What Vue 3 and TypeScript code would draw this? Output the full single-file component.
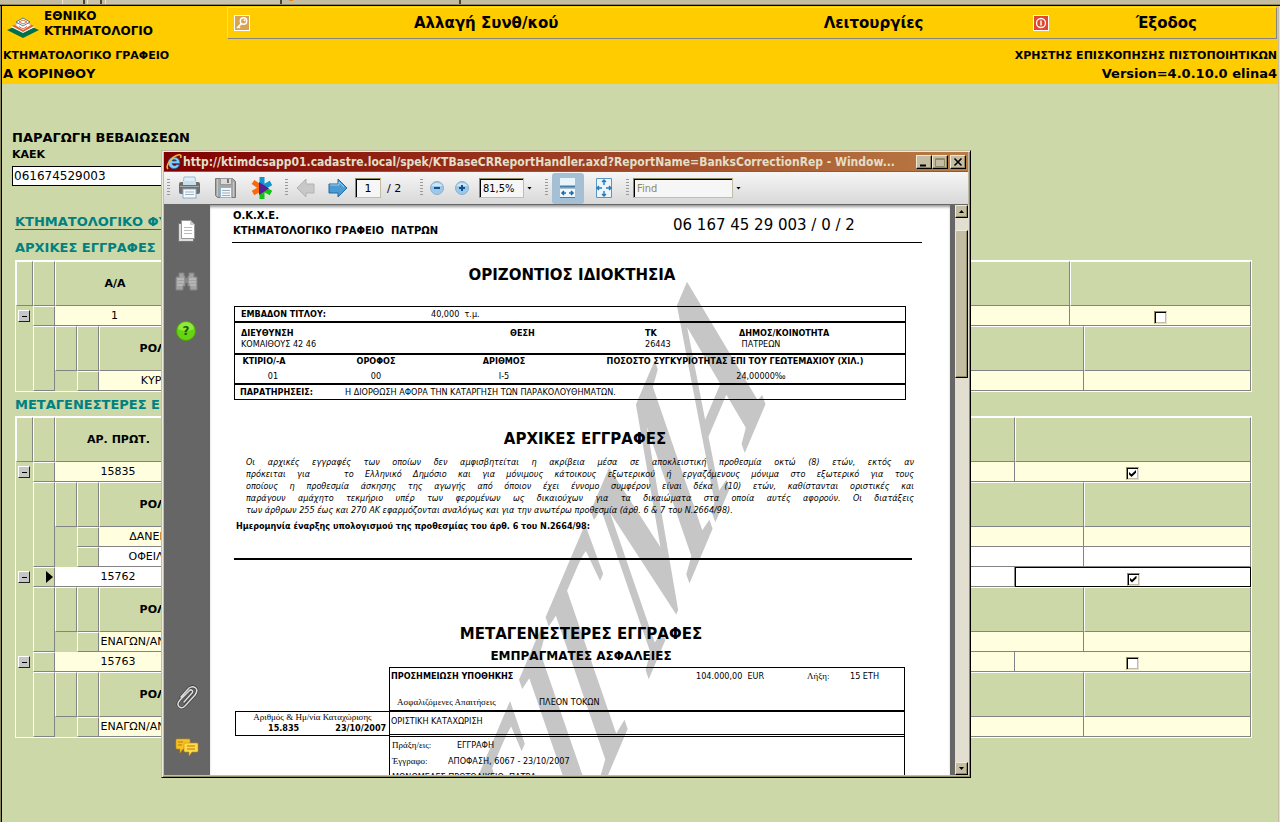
<script setup lang="ts">
import { ref } from 'vue'

interface Child { role: string; white?: boolean }
interface Entry { no: string; checked: boolean; current?: boolean; children: Child[] }
interface Section { title: string; head: string; kind: string; entries: Entry[] }

const kaek = ref('061674529003')
const pageNo = ref('1')
const zoomLevel = ref('81,5%')
const findText = ref('')

const sections = ref<Section[]>([
  {
    title: 'ΑΡΧΙΚΕΣ ΕΓΓΡΑΦΕΣ',
    head: 'Α/Α',
    kind: 'initial',
    entries: [{ no: '1', checked: false, children: [{ role: 'ΚΥΡΙΟΣ' }] }],
  },
  {
    title: 'ΜΕΤΑΓΕΝΕΣΤΕΡΕΣ ΕΓΓΡΑΦΕΣ',
    head: 'ΑΡ. ΠΡΩΤ.',
    kind: 'later',
    entries: [
      { no: '15835', checked: true, children: [{ role: 'ΔΑΝΕΙΣΤΗΣ' }, { role: 'ΟΦΕΙΛΕΤΗΣ', white: true }] },
      { no: '15762', checked: true, current: true, children: [{ role: 'ΕΝΑΓΩΝ/ΑΝΑΚΟΠΤΩΝ' }] },
      { no: '15763', checked: false, children: [{ role: 'ΕΝΑΓΩΝ/ΑΝΑΚΟΠΤΩΝ' }] },
    ],
  },
])

const paragraph: string[] = [
  'Οι αρχικές εγγραφές των οποίων δεν αμφισβητείται η ακρίβεια μέσα σε αποκλειστική προθεσμία οκτώ (8) ετών, εκτός αν',
  'πρόκειται για \u00a0 το Ελληνικό Δημόσιο και για μόνιμους κάτοικους εξωτερικού ή εργαζόμενους μόνιμα στο εξωτερικό για τους',
  'οποίους η προθεσμία άσκησης της αγωγής από όποιον έχει έννομο συμφέρον είναι δέκα (10) ετών, καθίστανται οριστικές και',
  'παράγουν αμάχητο τεκμήριο υπέρ των φερομένων ως δικαιούχων για τα δικαιώματα στα οποία αυτές αφορούν. Οι διατάξεις',
]
</script>

<template>
  <div class="desktop">
    <div class="strip">
      <i class="tab t1"></i><i class="tab t2"></i><i class="tab t3"></i><i class="dot"></i><i class="tab t4"></i>
    </div>
    <div class="page">
      <header class="top">
        <div class="bar">
          <div class="brand">
            <svg width="32" height="22" viewBox="0 0 32 22">
              <path d="M0 13 16 6 32 13 16 21Z" fill="#00704a" />
              <path d="M4 10 16 4 28 10 16 16Z" fill="#fff" />
              <path d="M5 9 16 4 27 9 16 15Z" fill="#e0622f" />
              <path d="M8 8 16 4 24 8 16 13Z" fill="#fff" />
              <path d="M9 5 16 1 23 5 16 9Z" fill="#fff" stroke="#226a9a" stroke-width=".8" />
              <path d="M12 5 16 3 20 5 16 7Z" fill="none" stroke="#e06a3a" />
              <path d="M12 9.500 16 12l4-2.500" stroke="#e06a3a" fill="none" />
            </svg>
            <h1>ΕΘΝΙΚΟ<br />ΚΤΗΜΑΤΟΛΟΓΙΟ</h1>
          </div>
          <nav class="menu">
            <svg width="16" height="16" viewBox="0 0 16 16">
              <rect width="16" height="16" fill="#fff" /><rect x="1" y="1" width="14" height="14" fill="#d9a254" />
              <circle cx="9.500" cy="6" r="3.200" fill="none" stroke="#fff" stroke-width="1.400" /><circle cx="10.500" cy="5.200" r="1" fill="#fff" />
              <path d="M7.500 8.500 3 13M4.500 11.500l1.500 1.500" stroke="#fff" stroke-width="1.600" fill="none" />
            </svg>
            <a href="#change">Αλλαγή Συνθ/κού</a>
            <a href="#functions">Λειτουργίες</a>
            <svg width="16" height="16" viewBox="0 0 16 16">
              <rect width="16" height="16" fill="#fff" /><rect x="1" y="1" width="14" height="14" fill="#e0492e" />
              <circle cx="8" cy="8" r="4.500" fill="none" stroke="#fff" stroke-width="1.300" />
              <path d="M8 5.500v5" stroke="#fff" stroke-width="1.500" />
            </svg>
            <a href="#exit">Έξοδος</a>
          </nav>
        </div>
        <div class="info">
          <p class="small">ΚΤΗΜΑΤΟΛΟΓΙΚΟ ΓΡΑΦΕΙΟ</p>
          <p class="small">ΧΡΗΣΤΗΣ ΕΠΙΣΚΟΠΗΣΗΣ ΠΙΣΤΟΠΟΙΗΤΙΚΩΝ</p>
          <p>Α ΚΟΡΙΝΘΟΥ</p>
          <p>Version=4.0.10.0 elina4</p>
        </div>
      </header>

      <main class="content">
        <h2 class="heading">ΠΑΡΑΓΩΓΗ ΒΕΒΑΙΩΣΕΩΝ</h2>
        <label class="caption" for="kaek">ΚΑΕΚ</label>
        <input id="kaek" v-model="kaek" class="kaek" type="text" />
        <a class="sheet" href="#sheet">ΚΤΗΜΑΤΟΛΟΓΙΚΟ ΦΥΛΛΟ</a>

        <section v-for="s in sections" :key="s.kind" class="section">
          <h3>{{ s.title }}</h3>
          <table class="grid" :class="s.kind">
            <colgroup><col class="c-exp" /><col class="c-sel" /><col class="c-no" /><col /><col class="c-check" /></colgroup>
            <thead>
              <tr><th></th><th></th><th>{{ s.head }}</th><th></th><th></th></tr>
            </thead>
            <tbody v-for="e in s.entries" :key="e.no" :class="{ current: e.current }">
              <tr class="row">
                <td class="exp" rowspan="2"><button type="button" aria-label="Σύμπτυξη"><i></i></button></td>
                <td class="sel"><svg v-if="e.current" width="7" height="12" viewBox="0 0 7 12"><path d="M0 0 7 6 0 12Z" /></svg></td>
                <td class="no">{{ e.no }}</td>
                <td></td>
                <td class="check"><input v-model="e.checked" type="checkbox" :aria-label="e.no" /></td>
              </tr>
              <tr>
                <td class="sel"></td>
                <td class="nest" colspan="3">
                  <table class="child">
                    <colgroup><col class="c-sel" /><col class="c-sel" /><col class="c-role" /><col /><col class="c-last" /></colgroup>
                    <thead>
                      <tr><th></th><th></th><th>ΡΟΛΟΣ</th><th></th><th></th></tr>
                    </thead>
                    <tbody>
                      <tr v-for="c in e.children" :key="c.role" class="row" :class="{ white: c.white }">
                        <td class="blank"></td><td class="sel"></td><td>{{ c.role }}</td><td></td><td></td>
                      </tr>
                    </tbody>
                  </table>
                </td>
              </tr>
            </tbody>
          </table>
        </section>
      </main>
    </div>

    <div class="window" role="dialog">
      <div class="titlebar">
        <svg width="16" height="16" viewBox="0 0 16 16">
          <path d="M13.800 9.500H6a2.600 2.600 0 0 0 4.500 1.300h3A5.800 5.800 0 1 1 13.800 9.500M6 7h4.500a2.400 2.400 0 0 0-4.500 0" fill="#7fd0fa" stroke="#1767b5" stroke-width=".8" fill-rule="evenodd" />
          <path d="M2 15C-1 12 5 3 12 1c3-.7 3.500 1 2.500 3" fill="none" stroke="#f2b632" stroke-width="1.600" />
        </svg>
        <span class="title">http://ktimdcsapp01.cadastre.local/spek/KTBaseCRReportHandler.axd?ReportName=BanksCorrectionRep - Window...</span>
        <button type="button" aria-label="Ελαχιστοποίηση"><svg width="10" height="10"><path d="M1 8.500h6" stroke="#000" stroke-width="2" /></svg></button>
        <button type="button" aria-label="Μεγιστοποίηση"><svg width="10" height="10"><path d="M.5 1.500h9v8h-9zM1 2.500h8" fill="none" stroke="#8e8a62" /></svg></button>
        <button class="close" type="button" aria-label="Κλείσιμο"><svg width="10" height="10"><path d="M1.500 1.500l7 7M8.500 1.500l-7 7" stroke="#000" stroke-width="1.600" /></svg></button>
      </div>

      <div class="toolbar">
        <i class="grip g1"></i>
        <button class="tool" type="button" aria-label="Εκτύπωση">
          <svg width="24" height="24" viewBox="0 0 24 24">
            <path d="M6 1h11l1 8H5Z" fill="#dceef8" stroke="#9dbdd0" />
            <rect x="1" y="6" width="21" height="12" rx="2" fill="#6f6f6f" /><rect x="5" y="5" width="13" height="4" fill="#c8e0ee" />
            <path d="M2 10.500h19" stroke="#aaa" /><rect x="5" y="13" width="13" height="9" fill="#f6fafd" stroke="#86aecb" /><path d="M7 16h9M7 18.500h9" stroke="#9db0bd" />
          </svg>
        </button>
        <button class="tool" type="button" aria-label="Αποθήκευση">
          <svg width="24" height="24" viewBox="0 0 24 24">
            <path d="M1.500 2.500h17l3 3v16h-18l-2-2Z" fill="#a5a5a5" stroke="#7a7a7a" /><path d="M3.500 3v17M19.500 6v15" stroke="#c8c8c8" />
            <rect x="6.500" y="2.500" width="11" height="6" fill="#dadada" stroke="#999" /><rect x="13" y="3" width="2" height="4" fill="#777" />
            <rect x="6.500" y="11.500" width="11" height="10" fill="#f4f8fb" stroke="#8db6d0" /><path d="M8 14.500h8M8 17h8M8 19.500h8" stroke="#98aebb" />
          </svg>
        </button>
        <button class="tool" type="button" aria-label="Συνεργασία">
          <svg width="24" height="24" viewBox="0 0 24 24" stroke-width="5">
            <path d="M12 12V1M12 12l9-5" stroke="#0f96cf" /><path d="M12 12 3 6M12 12l-9 5" stroke="#f96a0e" />
            <path d="M12 12l9 5M12 12v11" stroke="#13c313" /><path d="M9 6v13l10-6.500Z" fill="#5a1c94" />
          </svg>
        </button>
        <i class="grip g2"></i>
        <button class="tool arrow" type="button" aria-label="Προηγούμενη">
          <svg width="20" height="20" viewBox="0 0 20 20"><path d="M1 10 10 1v5h8v9h-8v4Z" fill="#c8c8c8" stroke="#b2b2b2" /></svg>
        </button>
        <button class="tool arrow next" type="button" aria-label="Επόμενη">
          <svg width="20" height="20" viewBox="0 0 20 20"><path d="M19 10 10 1v5H1v9h9v4Z" fill="#4b9bd4" stroke="#27699c" /><path d="M2 7h9V4l5 5" fill="none" stroke="#9fd0f0" /></svg>
        </button>
        <input v-model="pageNo" class="box page-no" type="text" aria-label="Σελίδα" />
        <span class="of">/ 2</span>
        <i class="grip g3"></i>
        <button class="tool round first" type="button" aria-label="Σμίκρυνση">
          <svg width="16" height="16"><circle cx="8" cy="8" r="6.500" fill="#9cc8ea" stroke="#8fb0c8" /><path d="M2.500 6a6 5 0 0 1 11 0" fill="#cfe6f5" /><path d="M5 8h6" stroke="#12518c" stroke-width="2" /></svg>
        </button>
        <button class="tool round" type="button" aria-label="Μεγέθυνση">
          <svg width="16" height="16"><circle cx="8" cy="8" r="6.500" fill="#9cc8ea" stroke="#8fb0c8" /><path d="M2.500 6a6 5 0 0 1 11 0" fill="#cfe6f5" /><path d="M5 8h6M8 5v6" stroke="#12518c" stroke-width="2" /></svg>
        </button>
        <input v-model="zoomLevel" class="box zoom" type="text" aria-label="Ζουμ" />
        <button class="caret" type="button" aria-label="Επιλογή ζουμ"></button>
        <i class="grip g4"></i>
        <button class="tool fit on" type="button" aria-label="Πλάτος σελίδας">
          <svg width="18" height="22" viewBox="0 0 18 22"><path d="M1 1h15v8H1z" fill="#e8f4fb" /><path d="M1 9.500h15" stroke="#4c7ba0" stroke-width="2" /><path d="M1 12h15v8H1z" fill="#eef7fc" /><path d="M1 20.500h15" stroke="#4c7ba0" /><path d="M3 16h4M10 16h4M5 14l-2 2 2 2M12 14l2 2-2 2" stroke="#1d6ca8" stroke-width="1.500" fill="none" /></svg>
        </button>
        <button class="tool fit" type="button" aria-label="Ολόκληρη σελίδα">
          <svg width="18" height="22" viewBox="0 0 18 22"><path d="M1.500 1.500h15v19h-15z" fill="#eaf5fc" stroke="#5b96c2" /><path d="M9 3v5M7 5l2-2 2 2M9 19v-5M7 17l2 2 2-2M2 11h5M4 9l-2 2 2 2M16 11h-5M14 9l2 2-2 2" stroke="#2a78b2" stroke-width="1.400" fill="none" /></svg>
        </button>
        <i class="grip g5"></i>
        <input v-model="findText" class="box find" type="text" placeholder="Find" aria-label="Find" />
        <button class="caret" type="button" aria-label="Επιλογές εύρεσης"></button>
      </div>

      <div class="viewer">
        <aside class="side">
          <svg width="22" height="24" viewBox="0 0 22 24">
            <path d="M2.500 4.500h11l4 4v14h-15Z" fill="#ddd" stroke="#777" /><path d="M5.500 1.500h9l4 4v14h-13Z" fill="#fff" stroke="#999" /><path d="M14 1v5h5" fill="#ccc" /><path d="M8 8.500h8M8 11.500h8M8 14.500h8" stroke="#bbb" />
          </svg>
          <svg class="bino" width="24" height="20" viewBox="0 0 24 20">
            <path d="M4 1h5v3h1v10H8v4H1V5h3ZM14 1h5v4h3v13h-7v-4h-2V4h1Z" fill="#a2a2a2" stroke="#838383" /><path d="M2 7h7M2 10h7M2 13h6M14 7h7M14 10h7M15 13h6" stroke="#c8c8c8" /><path d="M10 6h3v5h-3z" fill="#888" />
          </svg>
          <svg class="help" width="22" height="22" viewBox="0 0 22 22">
            <circle cx="11" cy="11" r="9.500" fill="#66d410" stroke="#4ca30c" /><path d="M3 9a8 7 0 0 1 16 0q-8 4-16 0" fill="#8fe83a" />
            <text x="11" y="15" text-anchor="middle" font-size="12" font-weight="bold" fill="#185c0c">?</text>
          </svg>
          <svg class="clip" width="24" height="26" viewBox="0 0 24 26" fill="none" stroke-linecap="round">
            <path d="M9 17 17 8c2-2-1-4-2.500-2.500L5 15c-5 6 1 10 5 6l10-11c5-7-2-10-6-7L6 12" stroke="#444" stroke-width="3" />
            <path d="M9 17 17 8c2-2-1-4-2.500-2.500L5 15c-5 6 1 10 5 6l10-11c5-7-2-10-6-7L6 12" stroke="#ddd" stroke-width="1.500" />
          </svg>
          <svg width="24" height="20" viewBox="0 0 24 20">
            <path d="M2 1h12q1 0 1 1v8q0 1-1 1H8l-3 4V11H2q-1 0-1-1V2q0-1 1-1Z" fill="#f7c229" stroke="#c88e08" stroke-width=".6" />
            <path d="M10 5h12q1 0 1 1v7q0 1-1 1h-5l-3 4v-4h-4q-1 0-1-1V6q0-1 1-1Z" fill="#ffdb4b" stroke="#c88e08" stroke-width=".6" /><path d="M3 4h5M3 7h4M12 8h8M12 11h8" stroke="#b77b00" />
          </svg>
        </aside>

        <article class="paper">
          <svg class="watermark" width="740" height="570" viewBox="0 0 740 570" aria-hidden="true">
            <text transform="translate(556 198) rotate(-67) skewX(-48)" text-anchor="end" font-size="182" font-weight="bold" fill="#c6c6c6">ΔΕΙΓΜΑ</text>
          </svg>
          <div class="doc">
            <header class="doc-head">
              <p>Ο.Κ.Χ.Ε.<br />ΚΤΗΜΑΤΟΛΟΓΙΚΟ ΓΡΑΦΕΙΟ&nbsp; ΠΑΤΡΩΝ</p>
              <p class="code">06 167 45 29 003 / 0 / 2</p>
            </header>
            <h4 class="h-prop">ΟΡΙΖΟΝΤΙΟΣ ΙΔΙΟΚΤΗΣΙΑ</h4>
            <div class="property">
              <div class="pr p1"><b>ΕΜΒΑΔΟΝ ΤΙΤΛΟΥ:</b><span>40,000&nbsp; τ.μ.</span></div>
              <div class="pr p2">
                <div><b>ΔΙΕΥΘΥΝΣΗ</b><span>ΚΟΜΑΙΘΟΥΣ 42 46</span></div>
                <div><b>ΘΕΣΗ</b></div>
                <div><b>ΤΚ</b><span>26443</span></div>
                <div><b>ΔΗΜΟΣ/ΚΟΙΝΟΤΗΤΑ</b><span>&nbsp;ΠΑΤΡΕΩΝ</span></div>
              </div>
              <div class="pr p3">
                <div><b>ΚΤΙΡΙΟ/-Α</b><span class="shift">01</span></div>
                <div><b>ΟΡΟΦΟΣ</b><span>00</span></div>
                <div><b>ΑΡΙΘΜΟΣ</b><span>Ι-5</span></div>
                <div class="share"><b>ΠΟΣΟΣΤΟ ΣΥΓΚΥΡΙΟΤΗΤΑΣ ΕΠΙ ΤΟΥ ΓΕΩΤΕΜΑΧΙΟΥ (ΧΙΛ.)</b><span>24,00000‰</span></div>
              </div>
              <div class="pr p4"><b>ΠΑΡΑΤΗΡΗΣΕΙΣ:</b><span>Η ΔΙΟΡΘΩΣΗ ΑΦΟΡΑ ΤΗΝ ΚΑΤΑΡΓΗΣΗ ΤΩΝ ΠΑΡΑΚΟΛΟΥΘΗΜΑΤΩΝ.</span></div>
            </div>
            <h4 class="h-init">ΑΡΧΙΚΕΣ ΕΓΓΡΑΦΕΣ</h4>
            <div class="para">
              <p v-for="line in paragraph" :key="line" class="full">{{ line }}</p>
              <p>των άρθρων 255 έως και 270 ΑΚ εφαρμόζονται αναλόγως και για την ανωτέρω προθεσμία (άρθ. 6 &amp; 7 του Ν.2664/98).</p>
            </div>
            <p class="date">Ημερομηνία έναρξης υπολογισμού της προθεσμίας του άρθ. 6 του Ν.2664/98:</p>
            <h4 class="h-later">ΜΕΤΑΓΕΝΕΣΤΕΡΕΣ ΕΓΓΡΑΦΕΣ</h4>
            <h5>ΕΜΠΡΑΓΜΑΤΕΣ ΑΣΦΑΛΕΙΕΣ</h5>
            <div class="lien">
              <div class="reg">
                <p class="serif">Αριθμός &amp; Ημ/νία Καταχώρισης</p>
                <p class="nums"><b>15.835</b><b>23/10/2007</b></p>
              </div>
              <div class="detail">
                <div class="d1">
                  <b>ΠΡΟΣΗΜΕΙΩΣΗ ΥΠΟΘΗΚΗΣ</b><span>104.000,00&nbsp; EUR</span><span class="serif">Λήξη:</span><span>15 ΕΤΗ</span>
                </div>
                <div class="d2"><span class="serif">Ασφαλιζόμενες Απαιτήσεις</span><span>ΠΛΕΟΝ ΤΟΚΩΝ</span></div>
                <div class="d3">ΟΡΙΣΤΙΚΗ ΚΑΤΑΧΩΡΙΣΗ</div>
                <div class="d4">
                  <p><span class="serif">Πράξη/εις:</span><span class="act">ΕΓΓΡΑΦΗ</span></p>
                  <p><span class="serif">Έγγραφο:</span><span>ΑΠΟΦΑΣΗ, 6067 - 23/10/2007</span></p>
                  <p>ΜΟΝΟΜΕΛΕΣ ΠΡΩΤΟΔΙΚΕΙΟ&nbsp; ΠΑΤΡΑ</p>
                </div>
              </div>
            </div>
          </div>
        </article>
        <div class="scroll">
          <button type="button" class="up" aria-label="Πάνω"></button>
          <div class="thumb"></div>
          <button type="button" class="down" aria-label="Κάτω"></button>
        </div>
      </div>
    </div>
  </div>
</template>

<style>
body { margin: 0; overflow: hidden; }
</style>

<style scoped>
* { box-sizing: border-box; }
p, h1, h2, h3, h4, h5 { margin: 0; }
button { padding: 0; font: inherit; }
svg { display: block; flex: none; }
.desktop {
  position: relative; height: 100vh; min-height: 600px; overflow: hidden; display: flex; flex-direction: column;
  background: #ccd8a8; color: #000; font-family: "DejaVu Sans", Verdana, sans-serif; font-size: 11px;
}
.strip { height: 6px; flex: none; display: flex; background: #c5bda3; border-bottom: 1px solid #000; box-shadow: inset 0 -1px #8e8a62; padding-left: 62px; }
.tab { height: 4px; border-left: 1px solid #eeeada; border-right: 2px solid #4a4632; background: #cbc4ad; }
.t1 { width: 23px; }
.t2 { width: 15px; margin-left: 2px; }
.t3 { width: 177px; margin-left: 3px; }
.t4 { width: 168px; background: none; border-left: 0; }
.dot { width: 4px; height: 1px; margin-left: 7px; background: #e88a18; }
.page { flex: 1; border-left: 1px solid #8e8a62; border-right: 1px solid #e2dfd1; box-shadow: inset 1px 0 #000, inset -1px 0 #c5bda3; padding: 0 1px; }

.top { height: 78px; background: #fc0; }
.bar { display: flex; height: 34px; padding: 1px 1px 0 0; }
.brand { width: 225px; display: flex; align-items: flex-start; gap: 5px; padding-left: 5px; }
.brand svg { margin-top: 10px; }
.brand h1 { font-size: 12px; line-height: 15px; padding-top: 2px; }
.menu {
  flex: 1; height: 32px; display: grid; grid-template-columns: 24px 462fr 322fr 24px 222fr; align-items: center;
  border: 1px solid #848484; border-top-color: #e0dcb8; border-left-color: #e0dcb8; padding-left: 6px;
}
.menu a { color: #000; text-decoration: none; font-weight: bold; font-size: 15px; text-align: center; }
.info { display: grid; grid-template-columns: 1fr 1fr; padding: 7px 1px 0 1px; font-weight: bold; font-size: 13px; line-height: 18px; }
.info p:nth-child(even) { text-align: right; }
.info .small { font-size: 11px; }

.content { padding: 46px 26px 0 13px; }
.heading { font-size: 13px; line-height: 16px; margin-left: -3px; }
.caption { display: block; margin: 2px 0 4px -3px; font-weight: bold; font-size: 11px; line-height: 14px; }
.kaek { display: block; width: 200px; height: 20px; margin-left: -3px; border: 1px solid #000; border-radius: 0; padding: 0 1px; font: 12px "DejaVu Sans", sans-serif; background: #fff; }
.sheet { display: table; margin: 29px 0 10px; line-height: 14px; font-size: 13px; font-weight: bold; color: #008080; text-decoration: none; border-bottom: 1px solid #008080; }
.section h3 { font-size: 13px; line-height: 16px; color: #008080; margin-bottom: 4px; }
.section + .section h3 { padding-top: 5px; margin-bottom: 3px; }
table { width: 100%; table-layout: fixed; border-collapse: separate; border-spacing: 0; }
.grid { border: 1px solid #fff; font-size: 11px; }
.c-exp { width: 17px; }
.c-sel { width: 22px; }
.c-no { width: 120px; }
.later .c-no { width: 127px; }
.c-role { width: 124px; }
.c-last { width: 167px; }
.initial .c-check { width: 181px; }
.later .c-check { width: 236px; }
th, td { padding: 0; text-align: center; white-space: nowrap; overflow: hidden; }
th { height: 45px; border: 1px solid #848484; border-top-color: #fff; border-left-color: #fff; }
.row > td { height: 20px; line-height: 16px; background: #ffffdf; border-right: 1px solid #848484; border-bottom: 1px solid #848484; }
.row.white > td, .current > .row > td { background: #fff; }
.grid td.exp, .grid td.blank { background: #ccd8a8; border: 0; vertical-align: top; }
.grid td.sel { background: #ccd8a8; border: 1px solid #848484; border-top-color: #fff; border-left-color: #fff; }
.sel svg { margin-left: 12px; }
.grid td.nest { height: auto; vertical-align: top; }
.exp button { display: flex; align-items: center; justify-content: center; width: 12px; height: 12px; margin: 4px 0 0 2px; background: #c6c6c6; border: 1px solid #222; border-top-color: #fff; border-left-color: #fff; }
.exp i { width: 5px; height: 1px; background: #000; }
.check input {
  appearance: none; display: grid; place-items: center; width: 13px; height: 13px; margin: 4px auto 0; background: #fff;
  border: 1px solid #8e8a62; border-right-color: #e2dfd1; border-bottom-color: #e2dfd1; box-shadow: inset 1px 1px #000, inset -1px -1px #c5bda3;
}
.check input:checked::after { content: ""; width: 7px; height: 7px; background: #000; clip-path: polygon(0 30%, 36% 62%, 100% 0, 100% 38%, 36% 100%, 0 66%); }
.current > .row > td.check { border: 1px solid #000; }

.window {
  position: absolute; left: 161px; right: 309px; top: 150px; bottom: 44px; display: flex; flex-direction: column;
  border: 1px solid #000; border-top-color: #c5bda3; border-left-color: #c5bda3; background: #c5bda3; padding: 1px 1px 2px;
  box-shadow: inset 1px 1px #eeeada, inset -1px -1px #8e8a62;
}
.titlebar { height: 19px; flex: none; display: flex; align-items: center; margin: 0 1px; padding: 0 2px; background: linear-gradient(90deg, #800000, #b97c44); }
.title { flex: 1; min-width: 0; padding-left: 1px; white-space: nowrap; overflow: hidden; color: #e2dfc8; font: bold 12px "DejaVu Sans Condensed", Tahoma, sans-serif; line-height: 18px; }
.titlebar button { display: grid; place-items: center; width: 16px; height: 14px; background: #c5bda3; border: 1px solid #000; border-top-color: #eeeada; border-left-color: #eeeada; box-shadow: inset -1px -1px #8e8a62; }
.titlebar .close { margin-left: 2px; }
.toolbar { height: 34px; flex: none; display: flex; align-items: center; margin: 0 1px; border-top: 1px solid #666; border-bottom: 1px solid #666; background: linear-gradient(#f6f6f6, #d8d8d8); }
.grip { width: 3px; height: 18px; flex: none; background: repeating-linear-gradient(#999 0 1px, transparent 1px 3px); }
.g1 { margin-left: 3px; }
.g2 { margin-left: 11px; }
.g3 { margin-left: 16px; }
.g4 { margin-left: 13px; }
.g5 { margin-left: 6px; }
.tool { border: 0; background: none; display: grid; place-items: center; margin-left: 12px; flex: none; }
.g1 + .tool { margin-left: 8px; }
.arrow { margin-left: 8px; }
.next { margin-left: 12px; }
.round { margin-left: 9px; }
.round.first { margin-left: 6px; }
.box { height: 20px; border: 1px solid #8e8a62; border-right-color: #c5bda3; border-bottom-color: #c5bda3; border-radius: 0; box-shadow: inset 1px 1px #000; background: #f6f6f6; padding: 0 3px; font: 11px "DejaVu Sans", Tahoma, sans-serif; }
.page-no { width: 26px; margin-left: 7px; text-align: center; }
.of { margin-left: 6px; font: 11px "DejaVu Sans", Tahoma, sans-serif; width: 17px; white-space: nowrap; }
.zoom { width: 45px; margin-left: 9px; font-family: "DejaVu Sans Condensed", Tahoma, sans-serif; }
.find { width: 100px; margin-left: 4px; font-family: "DejaVu Sans Condensed", Tahoma, sans-serif; }
.find::placeholder { color: #8e8a62; opacity: 1; }
.caret { width: 5px; height: 3px; margin-left: 3px; border: 0; background: #000; clip-path: polygon(0 0, 100% 0, 50% 100%); flex: none; }
.tool.fit { width: 32px; height: 31px; margin-left: 4px; border-radius: 3px; }
.tool.on { background: #a5c0d5; }

.viewer { flex: 1; min-height: 0; display: flex; margin: 0 0 0 1px; background: #666; }
.side { width: 46px; flex: none; display: flex; flex-direction: column; align-items: center; padding: 14px 0 17px; }
.bino { margin-top: 29px; }
.help { margin-top: 28px; margin-right: 3px; }
.clip { margin-top: auto; margin-bottom: 27px; }
.paper { flex: 1; min-width: 0; position: relative; overflow: hidden; background: #fff; box-shadow: inset 0 3px 3px -1px #999; margin-right: 5px; }
.watermark { position: absolute; left: 0; top: 0; font-family: "Liberation Serif", serif; }
.doc { position: relative; padding: 3px 28px 0 22px; font-size: 9px; line-height: 11px; }
.doc-head { display: flex; height: 35px; border-bottom: 1px solid #000; padding-left: 1px; font-size: 10px; font-weight: bold; line-height: 15px; }
.doc-head p { width: 440px; }
.doc-head .code { flex: 1; font-size: 15px; font-weight: normal; padding-top: 10px; }
.doc h4 { font-size: 15px; line-height: 18px; text-align: center; }
.doc .h-prop { margin-top: 23px; margin-right: 10px; }
.property { margin: 22px 16px 0 2px; border: 1px solid #000; font-family: "DejaVu Sans Condensed", Tahoma, sans-serif; }
.pr { display: grid; white-space: nowrap; }
.pr + .pr { border-top: 2px solid #000; }
.pr div > b, .pr div > span { display: block; }
.p1 { grid-template-columns: 190px 1fr; height: 14px; padding-left: 6px; line-height: 14px; }
.p2 { grid-template-columns: 269px 135px 94px 1fr; height: 32px; padding: 5px 0 0 6px; }
.p3 { grid-template-columns: 58px 166px 90px 1fr; height: 30px; padding-top: 1px; text-align: center; }
.p3 span { padding-top: 4px; }
.p3 .shift { padding-left: 18px; }
.share { padding-left: 16px; }
.share span { padding-left: 52px; }
.p4 { grid-template-columns: 105px 1fr; height: 16px; padding-left: 5px; line-height: 14px; }
.doc .h-init { margin: 30px 0 8px 16px; }
.para { margin: 0 8px 0 14px; font: italic 9px "DejaVu Sans Condensed", Tahoma, sans-serif; line-height: 12px; white-space: nowrap; }
.para .full { text-align-last: justify; white-space: normal; }
.date { margin: 5px 10px 0 2px; padding: 0 2px 26px; font-weight: bold; border-bottom: 2px solid #000; font-family: "DejaVu Sans Condensed", Tahoma, sans-serif; }
.doc .h-later { margin-top: 65px; margin-left: 8px; }
.doc h5 { font-size: 12px; line-height: 16px; margin: 5px 0 3px 8px; text-align: center; }
.serif { font-family: "Liberation Serif", serif; font-size: 9px; }
.lien { display: flex; margin: 0 17px 0 3px; font-family: "DejaVu Sans Condensed", Tahoma, sans-serif; white-space: nowrap; }
.reg { width: 155px; height: 25px; margin: 44px -1px 0 0; border: 1px solid #000; text-align: center; }
.reg b { margin: 0 18px; }
.nums { padding-left: 14px; }
.detail { flex: 1; min-width: 0; border: 1px solid #000; border-bottom: 0; }
.d1 { display: grid; grid-template-columns: 305px 111px 43px 1fr; height: 29px; padding: 3px 0 0 1px; }
.d2 { display: grid; grid-template-columns: 142px 1fr; height: 13px; padding-left: 7px; }
.d3 { height: 25px; border-top: 2px solid #000; border-bottom: 1px solid #000; padding: 4px 0 0 1px; }
.d4 { border-top: 1px solid #000; margin-top: 1px; padding: 0 2px; line-height: 16px; }
.d4 p { display: flex; }
.d4 .serif { width: 56px; }
.d4 .act { margin-left: 9px; }
.scroll { width: 14px; flex: none; display: flex; flex-direction: column; background: #e2dfd1; }
.scroll button, .thumb { border: 1px solid #000; border-top-color: #eeeada; border-left-color: #eeeada; box-shadow: inset -1px -1px #8e8a62; background: #c5bda3; width: 13px; }
.scroll button { height: 13px; display: grid; place-items: center; }
.scroll button::after { content: ""; width: 5px; height: 3px; background: #000; clip-path: polygon(50% 0, 100% 100%, 0 100%); }
.scroll .down::after { clip-path: polygon(0 0, 100% 0, 50% 100%); }
.thumb { flex: 0 0 26%; margin: 12px 0 auto; }
</style>
